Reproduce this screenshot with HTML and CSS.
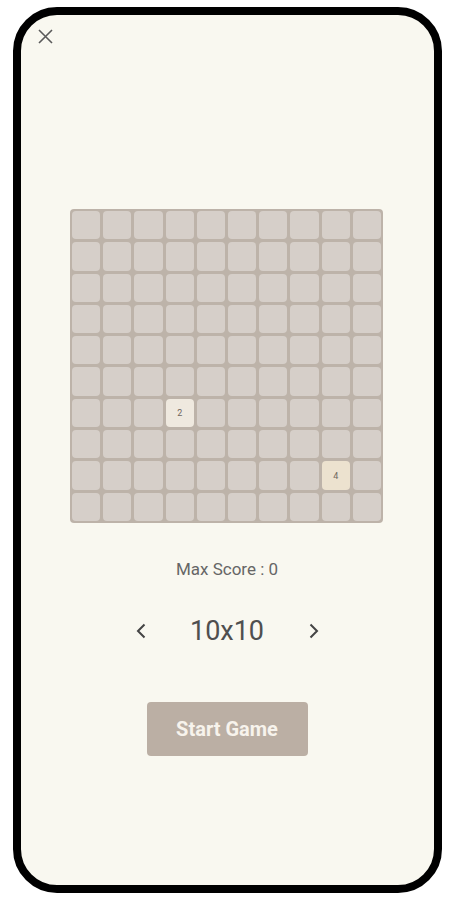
FILE: index.html
```html
<!DOCTYPE html>
<html>
<head>
<meta charset="utf-8">
<link rel="stylesheet" href="styles.css">
</head>
<body>
<div class="phone">
  <div class="topbar">
    <svg class="close" width="15" height="15" viewBox="0 0 15 15"><path d="M1 1 L14 14 M14 1 L1 14" stroke="#5a5a5a" stroke-width="1.6" fill="none"/></svg>
  </div>
  <div class="board" id="board"></div>
  <div class="score">Max Score : 0</div>
  <div class="size-row">
    <svg class="chev" width="10" height="16" viewBox="0 0 10 16"><path d="M8.5 1.5 L2 8 L8.5 14.5" stroke="#444" stroke-width="2" fill="none"/></svg>
    <span class="size">10x10</span>
    <svg class="chev" width="10" height="16" viewBox="0 0 10 16"><path d="M1.5 1.5 L8 8 L1.5 14.5" stroke="#444" stroke-width="2" fill="none"/></svg>
  </div>
  <button class="start">Start Game</button>
</div>
<script>
  var b = document.getElementById('board');
  for (var r = 0; r < 10; r++) {
    for (var c = 0; c < 10; c++) {
      var d = document.createElement('div');
      d.className = 'cell';
      if (r === 6 && c === 3) { d.className = 'cell t2'; d.textContent = '2'; }
      if (r === 8 && c === 8) { d.className = 'cell t4'; d.textContent = '4'; }
      b.appendChild(d);
    }
  }
</script>
</body>
</html>
```
FILE: styles.css
```css
html, body {
  margin: 0;
  padding: 0;
  background: #ffffff;
}
body {
  font-family: Roboto, "Liberation Sans", sans-serif;
}
.phone {
  box-sizing: border-box;
  margin: 7px 0 0 13px;
  width: 429px;
  height: 886px;
  border: 8px solid #000;
  border-radius: 44px;
  background: #f9f8f0;
  display: flex;
  flex-direction: column;
  align-items: center;
}
.topbar {
  align-self: stretch;
  height: 15px;
  padding: 14px 0 0 17px;
}
.close {
  display: block;
}
.board {
  box-sizing: border-box;
  margin-top: 165px;
  margin-right: 2px;
  width: 313px;
  height: 314px;
  padding: 2px;
  background: #bdb3a9;
  border-radius: 4px;
  display: grid;
  grid-template-columns: repeat(10, 1fr);
  grid-template-rows: repeat(10, 1fr);
  gap: 3px;
}
.cell {
  background: #d6cfc9;
  border-radius: 4px;
  display: flex;
  align-items: center;
  justify-content: center;
  font-size: 9px;
  color: #6f665e;
}
.t2 { background: #efe9df; }
.t4 { background: #ece2cf; }
.score {
  margin-top: 36px;
  font-size: 17px;
  line-height: 20px;
  color: #666;
  margin-right: 1px;
}
.size-row {
  margin-top: 37px;
  margin-right: 1px;
  width: 203px;
  display: grid;
  grid-template-columns: 30px 143px 30px;
  align-items: center;
  justify-items: center;
}
.size {
  font-size: 27px;
  line-height: 30px;
  color: #4f4f4f;
}
.start {
  margin-top: 56px;
  margin-right: 1px;
  width: 161px;
  height: 54px;
  border: none;
  border-radius: 4px;
  background: #bbafa4;
  color: #f7f3ec;
  font-family: Roboto, "Liberation Sans", sans-serif;
  font-size: 20px;
  font-weight: 700;
  padding: 0;
}
```
